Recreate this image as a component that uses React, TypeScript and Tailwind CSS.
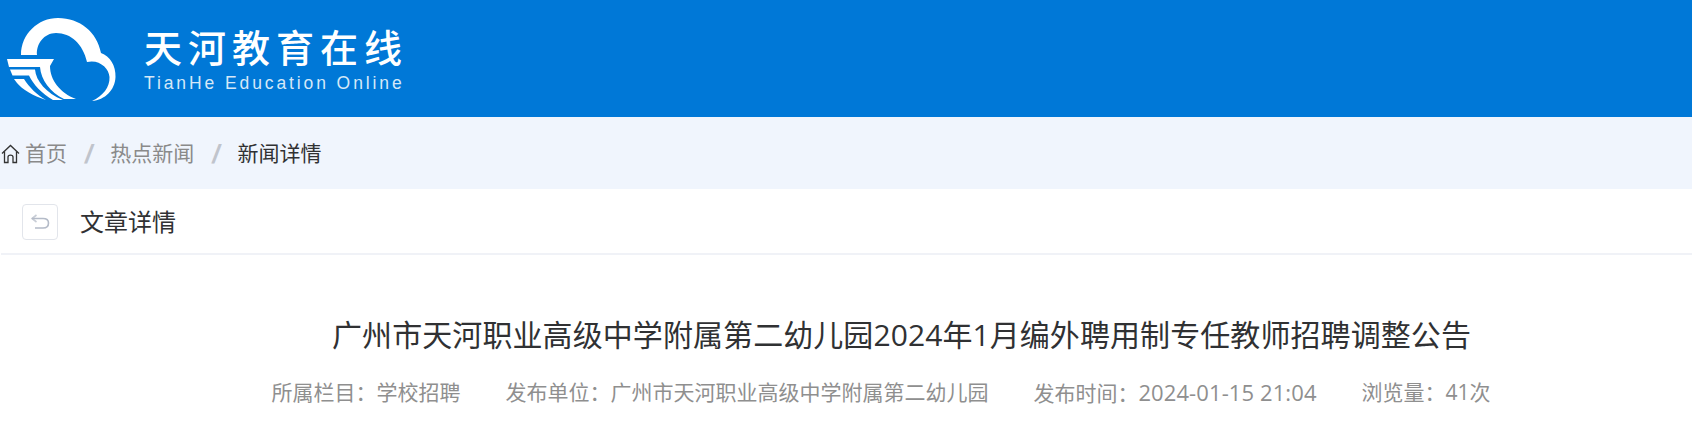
const CJK = "font-['Open_Sans','Noto_Sans_CJK_SC',sans-serif]";

function Logo() {
  return (
    <svg width="120" height="117" viewBox="0 0 120 117" className="shrink-0" fill="#fff">
      <path d="M21 55 C21 34 38 18 58 18 C80 18 97 32 101 53 C110 56 116 66 115.500 77 C115 90 105 100 92 101 C103 96 110 87 109.500 77 C109 68 99 59 87 62 C83 44 71 33 56 33 C44 33 36 44 37 55 Z" />
      <path d="M7 59 H54 L50 66 C50 80 60 93 76 99 L64 99 C50 92 41 80 40 67 H9 Z" />
      <path d="M10 69.500 H35 C36 81 46 93 63 100 L53 100 C42 94 33 84 29 75.500 H12.500 Z" />
      <path d="M14 79 H24 C29 87 37 95 46 100 C33 96 22 89 17 83 Z" />
    </svg>
  );
}

function Header() {
  return (
    <header className="flex h-[117px] items-start bg-[#0078d7] text-white">
      <Logo />
      <div className="ml-[24px] mt-[24px] flex flex-col">
        <span className="font-['Noto_Sans_CJK_SC',sans-serif] text-[38px] font-medium leading-[44px] tracking-[6px] text-white">
          天河教育在线
        </span>
        <span className="mt-[5px] font-['Liberation_Sans',sans-serif] text-[17.500px] leading-[20px] tracking-[2.900px] text-[#d5e8f8]">
          TianHe Education Online
        </span>
      </div>
    </header>
  );
}

function HomeIcon() {
  return (
    <svg width="19" height="20" viewBox="0 0 19 20" fill="none" stroke="#333" strokeWidth="1.300" className="ml-px">
      <path d="M1 9.500 L9.500 1.500 L18 9.500" />
      <path d="M3.500 7.500 V18.500 H7 V13 C7 10.500 12 10.500 12 13 V18.500 H15.500 V7.500" />
    </svg>
  );
}

function Separator() {
  return (
    <span className="mx-[18px] font-['Liberation_Sans',sans-serif] text-[26px] font-bold italic leading-none text-[#c0c4cc]">
      /
    </span>
  );
}

function Breadcrumb() {
  return (
    <nav className={`${CJK} flex h-[72px] items-center bg-[#f0f5fd] pt-0.5 text-[21px] text-[#8a8a8a]`}>
      <HomeIcon />
      <span className="ml-[5px]">首页</span>
      <Separator />
      <span>热点新闻</span>
      <Separator />
      <span className="text-[#303133]">新闻详情</span>
    </nav>
  );
}

function BackIcon() {
  return (
    <svg width="20" height="16" viewBox="0 0 20 16" fill="none" stroke="#b4bbc8" strokeWidth="1.600">
      <path d="M6.500 1 L2 4.500 L6.500 8" stroke="#c8cdd6" />
      <path d="M2 4.500 H13 C16.500 4.500 18.500 6.500 18.500 9 C18.500 12 16.500 14 13 14 H5" />
    </svg>
  );
}

export default function App() {
  return (
    <div className={`${CJK} h-[442px] overflow-hidden bg-white`}>
      <Header />
      <Breadcrumb />
      <div className="ml-px">
        <div className="flex h-[66px] items-center border-b-2 border-[#f0f2f7] pl-[21px] pt-0.5">
          <button
            type="button"
            className="flex h-[36px] w-[36px] items-center justify-center rounded-[4px] border border-[#e2e5eb] bg-white"
          >
            <BackIcon />
          </button>
          <span className="ml-[22px] text-[24px] text-[#303133]">文章详情</span>
        </div>
        <h1 className="mt-[60px] pl-[110px] text-center text-[30px] font-normal leading-[40px] tracking-[0.080px] text-[#303133]">
          广州市天河职业高级中学附属第二幼儿园2024年1月编外聘用制专任教师招聘调整公告
        </h1>
        <div className="mt-[22px] flex justify-center gap-[45px] pl-[69px] text-[21px] leading-[30px] text-[#8f8f8f]">
          <span>所属栏目：学校招聘</span>
          <span>发布单位：广州市天河职业高级中学附属第二幼儿园</span>
          <span>
            发布时间：<span className="text-[22px] tracking-[0.100px]">2024-01-15 21:04</span>
          </span>
          <span>浏览量：41次</span>
        </div>
      </div>
    </div>
  );
}
